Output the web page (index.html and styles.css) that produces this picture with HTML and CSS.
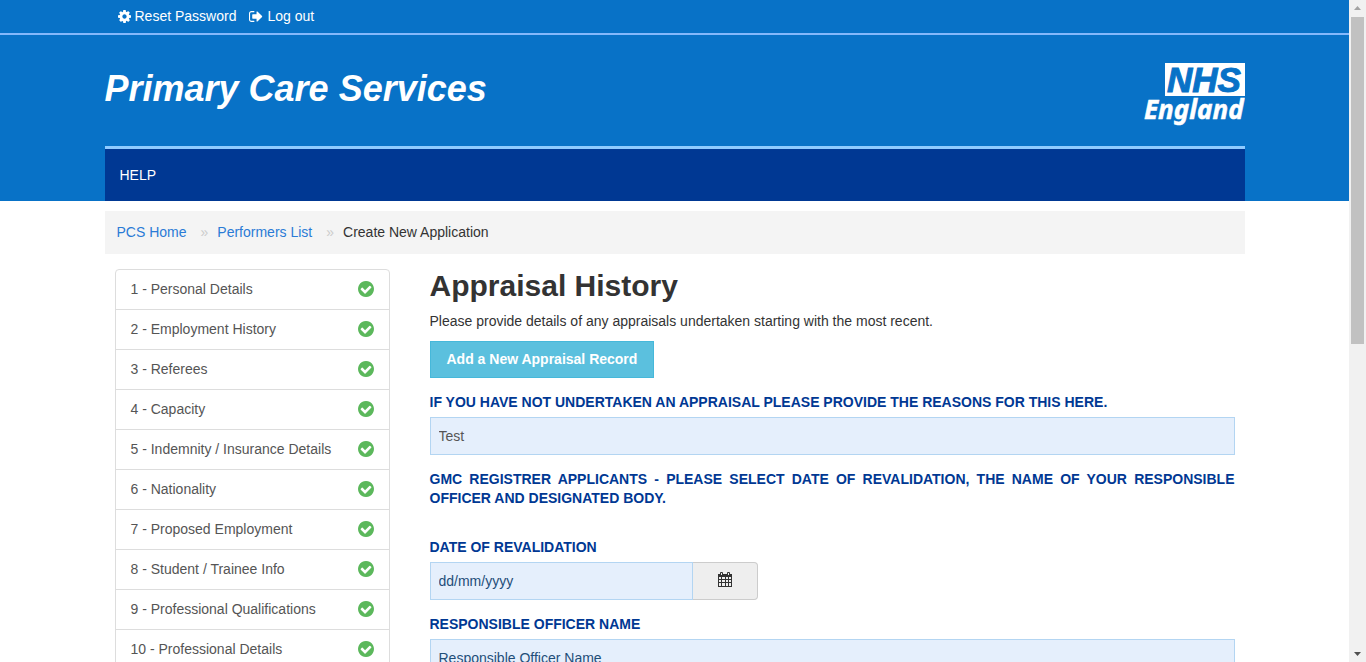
FILE: index.html
```html
<!DOCTYPE html>
<html lang="en">
<head>
<meta charset="utf-8">
<title>Primary Care Services - Appraisal History</title>
<meta name="viewport" content="width=device-width, initial-scale=1">
<link rel="stylesheet" href="styles.css">
</head>
<body>
<svg class="sprite" aria-hidden="true">
  <symbol id="check" viewBox="0 128 1536 1536"><path d="M1284 734q0-28-18-46l-91-90q-19-19-45-19t-45 19l-408 407-226-226q-19-19-45-19t-45 19l-91 90q-18 18-18 46 0 27 18 45l362 362q19 19 45 19 27 0 46-19l543-543q18-18 18-45zm252 162q0 209-103 385.500t-279.500 279.500-385.500 103-385.500-103-279.500-279.500-103-385.500 103-385.500 279.500-279.500 385.500-103 385.500 103 279.500 279.500 103 385.500z"/></symbol>
</svg>
<div class="window">
  <div class="page">
    <header class="masthead">
      <div class="topbar">
        <nav class="container account" aria-label="Account">
          <a href="#"><svg class="icon-cog" viewBox="0 128 1536 1536" aria-hidden="true"><path d="M1024 896q0-106-75-181t-181-75-181 75-75 181 75 181 181 75 181-75 75-181zm512-109v222q0 12-8 23t-20 13l-185 28q-19 54-39 91 35 50 107 138 10 12 10 25t-9 23q-27 37-99 108t-94 71q-12 0-26-9l-138-108q-44 23-91 38-16 136-29 186-7 28-36 28h-222q-14 0-24.500-8.500t-11.500-21.500l-28-184q-49-16-90-37l-141 107q-10 9-25 9-14 0-25-11-126-114-165-168-7-10-7-23 0-12 8-23 15-21 51-66.500t54-70.500q-27-50-41-99l-183-27q-13-2-21-12.500t-8-23.500v-222q0-12 8-23t19-13l186-28q14-46 39-92-40-57-107-138-10-12-10-24 0-10 9-23 26-36 98.500-107.500t94.500-71.500q13 0 26 10l138 107q44-23 91-38 16-136 29-186 7-28 36-28h222q14 0 24.500 8.500t11.500 21.500l28 184q49 16 90 37l142-107q9-9 24-9 13 0 25 10 129 119 165 170 7 8 7 22 0 12-8 23-15 21-51 66.500t-54 70.500q26 50 41 98l183 28q13 2 21 12.500t8 23.500z"/></svg>Reset Password</a>
          <a href="#"><svg class="icon-out" viewBox="0 128 1664 1536" aria-hidden="true"><path d="M640 1440q0 4 1 20t.5 26.500-3 23.500-10 19.500-20.500 6.500h-320q-119 0-203.500-84.500t-84.500-203.500v-704q0-119 84.500-203.500t203.500-84.500h320q13 0 22.500 9.500t9.500 22.500q0 4 1 20t.5 26.500-3 23.500-10 19.500-20.500 6.500h-320q-66 0-113 47t-47 113v704q0 66 47 113t113 47h312l11.500 1 11.500 3 8 5.500 7 9 2 13.500zm928-544q0 26-19 45l-544 544q-19 19-45 19t-45-19-19-45v-288h-448q-26 0-45-19t-19-45v-384q0-26 19-45t45-19h448v-288q0-26 19-45t45-19 45 19l544 544q19 19 19 45z"/></svg>Log out</a>
        </nav>
      </div>
      <div class="container">
        <div class="brand">
          <div class="site-name">Primary Care Services</div>
          <svg class="logo" viewBox="0 0 101 64" role="img" aria-label="NHS England">
            <rect x="21" y="1" width="80" height="33" fill="#fff"/>
            <text class="logo-nhs" x="23" y="30">NHS</text>
            <text class="logo-england" x="0" y="57">England</text>
          </svg>
        </div>
        <nav class="menu" aria-label="Main"><a href="#">HELP</a></nav>
      </div>
    </header>

    <div class="container">
      <nav class="breadcrumb" aria-label="Breadcrumb">
        <a href="#">PCS Home</a><span class="sep">»</span><a href="#">Performers List</a><span class="sep">»</span><span>Create New Application</span>
      </nav>
      <div class="columns">
        <nav class="steps" aria-label="Application steps">
          <a href="#">1 - Personal Details<svg><use href="#check"/></svg></a>
          <a href="#">2 - Employment History<svg><use href="#check"/></svg></a>
          <a href="#">3 - Referees<svg><use href="#check"/></svg></a>
          <a href="#">4 - Capacity<svg><use href="#check"/></svg></a>
          <a href="#">5 - Indemnity / Insurance Details<svg><use href="#check"/></svg></a>
          <a href="#">6 - Nationality<svg><use href="#check"/></svg></a>
          <a href="#">7 - Proposed Employment<svg><use href="#check"/></svg></a>
          <a href="#">8 - Student / Trainee Info<svg><use href="#check"/></svg></a>
          <a href="#">9 - Professional Qualifications<svg><use href="#check"/></svg></a>
          <a href="#">10 - Professional Details<svg><use href="#check"/></svg></a>
        </nav>
        <main class="content">
          <h1>Appraisal History</h1>
          <p class="intro">Please provide details of any appraisals undertaken starting with the most recent.</p>
          <button class="add" type="button">Add a New Appraisal Record</button>
          <form>
            <div class="field">
              <label for="reason">IF YOU HAVE NOT UNDERTAKEN AN APPRAISAL PLEASE PROVIDE THE REASONS FOR THIS HERE.</label>
              <input id="reason" type="text" value="Test">
            </div>
            <p class="note">GMC REGISTRER APPLICANTS - PLEASE SELECT DATE OF REVALIDATION, THE NAME OF YOUR RESPONSIBLE OFFICER AND DESIGNATED BODY.</p>
            <div class="field">
              <label for="date">DATE OF REVALIDATION</label>
              <div class="date-group">
                <input id="date" type="text" placeholder="dd/mm/yyyy">
                <button type="button" aria-label="Choose date"><svg viewBox="0 0 14 15" aria-hidden="true"><path fill-rule="evenodd" d="M0 2h2V1a1 1 0 0 1 1-1h1a1 1 0 0 1 1 1v1h4V1a1 1 0 0 1 1-1h1a1 1 0 0 1 1 1v1h2v13H0zM1 5v2h2V5zM4 5v2h3V5zM8 5v2h2V5zM11 5v2h2V5zM1 8v2h2V8zM4 8v2h3V8zM8 8v2h2V8zM11 8v2h2V8zM1 11v3h2v-3zM4 11v3h3v-3zM8 11v3h2v-3zM11 11v3h2v-3zM3 1v2h1V1zM10 1v2h1V1z"/></svg></button>
              </div>
            </div>
            <div class="field">
              <label for="officer">RESPONSIBLE OFFICER NAME</label>
              <input id="officer" type="text" placeholder="Responsible Officer Name">
            </div>
          </form>
        </main>
      </div>
    </div>
  </div>
  <div class="scrollbar" aria-hidden="true">
    <svg viewBox="0 0 17 17"><path d="M5 10h7L8.500 6z" fill="#a3a3a3"/></svg>
    <div class="track"><div class="thumb"></div></div>
    <svg viewBox="0 0 17 17"><path d="M5 7h7L8.500 11z" fill="#505050"/></svg>
  </div>
</div>
</body>
</html>
```
FILE: styles.css
```css
* { box-sizing: border-box; }

body {
  margin: 0;
  background: #fff;
  color: #333;
  font: 14px/20px "Liberation Sans", Arial, sans-serif;
}

a { text-decoration: none; }

.sprite { display: none; }

.window {
  display: flex;
  height: 100vh;
  overflow: hidden;
}

.page { flex: 1; min-width: 0; }

.container {
  max-width: 1140px;
  margin: 0 auto;
}

.masthead { background: #0872c7; }

.topbar { border-bottom: 2px solid #84b8fb; }

.account {
  display: flex;
  gap: 13px;
  padding: 6px 13px 7px;
}

.account a {
  display: flex;
  align-items: center;
  gap: 4px;
  color: #fff;
}

.account svg { fill: #fff; }
.icon-cog { width: 13px; height: 13px; }
.icon-out { width: 14px; height: 13px; }

.brand {
  display: flex;
  justify-content: space-between;
  align-items: flex-start;
  padding: 27px 0 20px;
}

.site-name {
  padding-top: 7px;
  color: #fff;
  font-size: 36px;
  font-style: italic;
  font-weight: bold;
  line-height: 40px;
}

.logo { width: 101px; height: 64px; }

.logo text { font-style: italic; }

.logo-nhs {
  fill: #0872c7;
  stroke: #0872c7;
  stroke-width: 1px;
  font-family: "Liberation Sans", Arial, sans-serif;
  font-size: 35px;
  font-weight: 700;
}

.logo-england {
  fill: #fff;
  stroke: #fff;
  stroke-width: 0.5px;
  font-family: "Noto Sans", "Open Sans", sans-serif;
  font-size: 26px;
  font-weight: 700;
}

.menu {
  padding: 16px 15px;
  border-top: 3px solid #8fcbff;
  background: #003893;
}

.menu a { color: #fff; }

.breadcrumb {
  margin: 10px 0 15px;
  padding: 11px 12px 12px;
  background: #f4f4f4;
}

.breadcrumb a { color: #2a7bd6; }
.sep { padding: 0 9px 0 14px; color: #ccc; }

.columns {
  display: flex;
  align-items: flex-start;
  gap: 40px;
  padding: 0 10px;
}

.steps {
  flex: 0 0 275px;
  border: 1px solid #ddd;
  border-radius: 4px;
}

.steps a {
  display: flex;
  justify-content: space-between;
  align-items: center;
  padding: 9px 15px 10px;
  border-bottom: 1px solid #ddd;
  color: #555;
}

.steps svg { width: 16px; height: 16px; fill: #5cb85c; }

.content { flex: 1; min-width: 0; }

h1 { margin: 0; font-size: 30px; line-height: 34px; }

.intro { margin: 8px 0 10px; }

.add {
  display: block;
  padding: 7px 16px 8px;
  border: 1px solid #46b8da;
  background: #5bc0de;
  color: #fff;
  font: bold 14px/20px "Liberation Sans", Arial, sans-serif;
}

form { padding-top: 15px; }

.field { margin-bottom: 15px; }

label, .note {
  display: block;
  color: #003893;
  font-weight: bold;
  line-height: 19px;
}

label { margin-bottom: 5px; }

.note { margin: 0 0 30px; text-align: justify; }

input {
  display: block;
  width: 100%;
  height: 38px;
  padding: 0 8px;
  border: 1px solid #b3d5f2;
  border-radius: 0;
  background: #e5effc;
  color: #555;
  font: inherit;
}

input::placeholder { color: #1f4e79; opacity: 1; }

.date-group { display: flex; }
.date-group input { width: 263px; }

.date-group button {
  width: 65px;
  border: 1px solid #ccc;
  border-left: 0;
  border-radius: 0 4px 4px 0;
  background: #eee;
}

.date-group svg { width: 14px; height: 15px; fill: #333; }

.scrollbar {
  display: flex;
  flex-direction: column;
  flex: 0 0 17px;
  background: #f1f1f1;
}

.scrollbar svg { width: 17px; height: 17px; }
.track { flex: 1; padding: 0 2px; }
.thumb { height: 52%; background: #c1c1c1; }
```
